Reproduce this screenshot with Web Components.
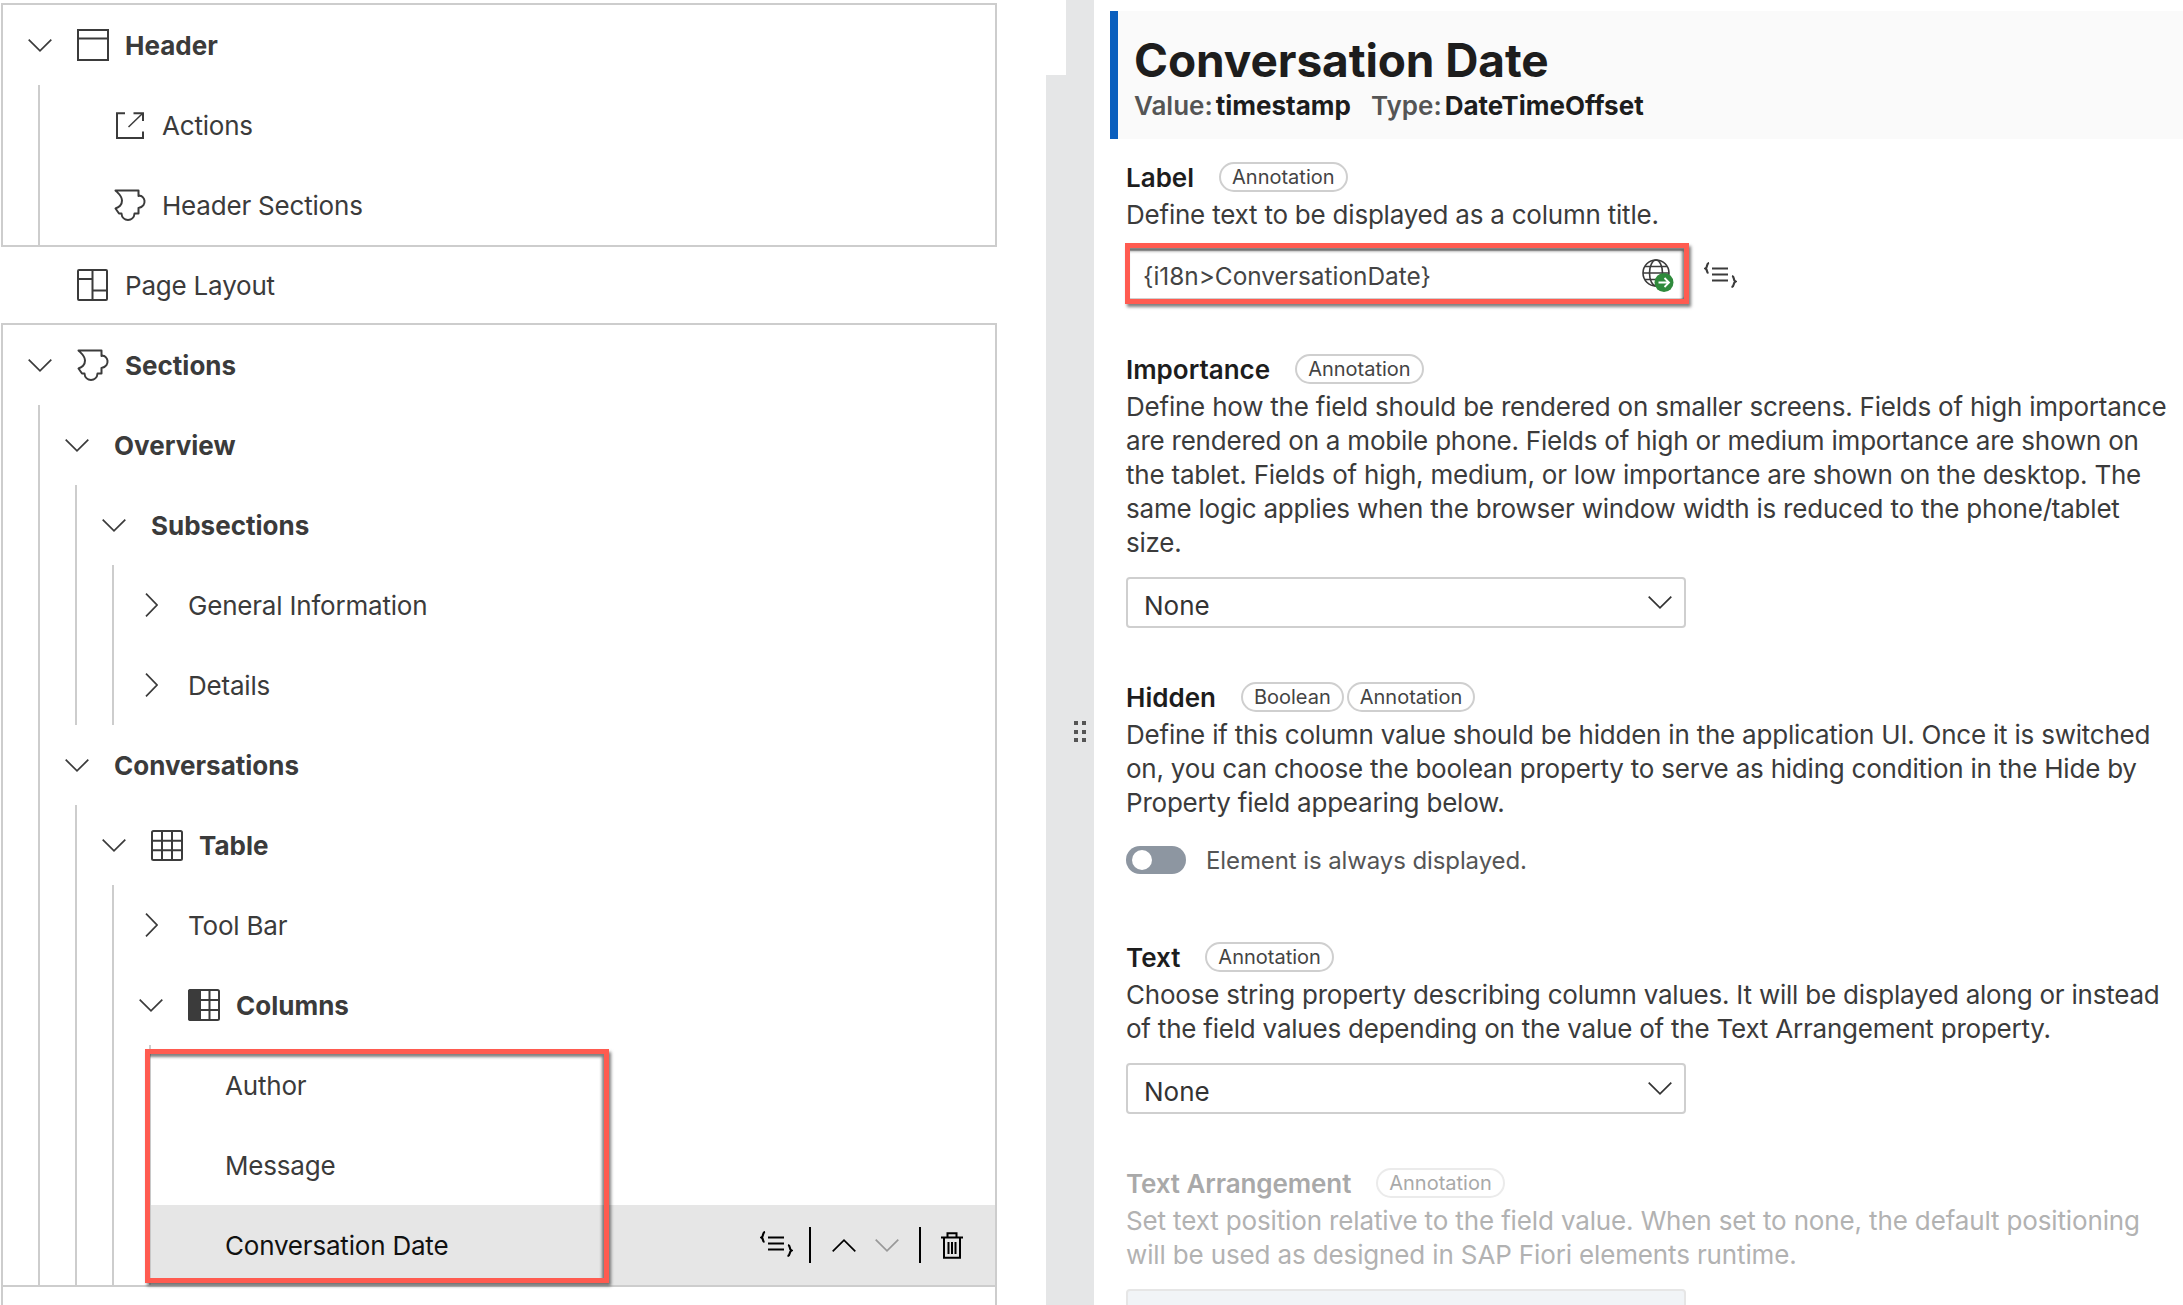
<!DOCTYPE html>
<html>
<head>
<meta charset="utf-8">
<title>Page Map</title>
<style>
html, body { margin: 0; height: 1305px; overflow: hidden; background: #fff; }
body { font-family: Inter, "Liberation Sans", sans-serif; font-size: 26px; color: #3b3b3b; }
</style>
</head>
<body>
<page-shell>
  <tree-panel slot="tree">
    <tree-box>
      <tree-node label="Header" icon="header" expand="open" strong>
        <tree-node label="Actions" icon="actions"></tree-node>
        <tree-node label="Header Sections" icon="puzzle"></tree-node>
      </tree-node>
    </tree-box>
    <tree-node label="Page Layout" icon="layout" compact></tree-node>
    <tree-box>
      <tree-node label="Sections" icon="puzzle" expand="open" strong>
        <tree-node label="Overview" expand="open" strong>
          <tree-node label="Subsections" expand="open" strong>
            <tree-node label="General Information" expand="closed"></tree-node>
            <tree-node label="Details" expand="closed"></tree-node>
          </tree-node>
        </tree-node>
        <tree-node label="Conversations" expand="open" strong>
          <tree-node label="Table" icon="table" expand="open" strong>
            <tree-node label="Tool Bar" expand="closed"></tree-node>
            <tree-node label="Columns" icon="columns" expand="open" strong>
              <tree-node label="Author"></tree-node>
              <tree-node label="Message"></tree-node>
              <tree-node label="Conversation Date" selected><row-actions slot="actions"></row-actions></tree-node>
            </tree-node>
          </tree-node>
        </tree-node>
      </tree-node>
    </tree-box>
    <tree-box open-end></tree-box>
    <call-out style="left:144px;top:1049px;width:464px;height:234px"></call-out>
  </tree-panel>

  <sash-bar slot="sash"></sash-bar>

  <prop-panel slot="props">
    <prop-header title="Conversation Date" value="timestamp" type="DateTimeOffset"></prop-header>

    <prop-field label="Label">
      <prop-chip slot="chips">Annotation</prop-chip>
      Define text to be displayed as a column title.
      <prop-input slot="control" value="{i18n&gt;ConversationDate}">
        <call-out style="left:-1px;top:-6px;right:-3px;bottom:-4px"></call-out>
      </prop-input>
    </prop-field>

    <prop-field label="Importance">
      <prop-chip slot="chips">Annotation</prop-chip>
      Define how the field should be rendered on smaller screens. Fields of high importance<br>
      are rendered on a mobile phone. Fields of high or medium importance are shown on<br>
      the tablet. Fields of high, medium, or low importance are shown on the desktop. The<br>
      same logic applies when the browser window width is reduced to the phone/tablet<br>
      size.
      <prop-select slot="control" value="None"></prop-select>
    </prop-field>

    <prop-field label="Hidden">
      <prop-chip slot="chips">Boolean</prop-chip>
      <prop-chip slot="chips">Annotation</prop-chip>
      Define if this column value should be hidden in the application UI. Once it is switched<br>
      on, you can choose the boolean property to serve as hiding condition in the Hide by<br>
      Property field appearing below.
      <prop-toggle slot="control">Element is always displayed.</prop-toggle>
    </prop-field>

    <prop-field label="Text">
      <prop-chip slot="chips">Annotation</prop-chip>
      Choose string property describing column values. It will be displayed along or instead<br>
      of the field values depending on the value of the Text Arrangement property.
      <prop-select slot="control" value="None"></prop-select>
    </prop-field>

    <prop-field label="Text Arrangement" disabled>
      <prop-chip slot="chips" disabled>Annotation</prop-chip>
      Set text position relative to the field value. When set to none, the default positioning<br>
      will be used as designed in SAP Fiori elements runtime.
      <prop-select slot="control" disabled></prop-select>
    </prop-field>
  </prop-panel>
</page-shell>

<script>
const CHEVRON_DOWN = '<svg width="24" height="13" viewBox="0 0 24 13" fill="none" stroke="currentColor" stroke-width="1.7"><path d="M.7 .7 12 11.8 23.3 .7"/></svg>';
const CHEVRON_RIGHT = '<svg width="13" height="24" viewBox="0 0 13 24" fill="none" stroke="currentColor" stroke-width="1.7"><path d="M1 .7 12 12 1 23.3"/></svg>';

// tree icons, all stroked with the text colour
const ICONS = {
    header: '<svg width="32" height="32" viewBox="0 0 32 32" fill="none" stroke="currentColor" stroke-width="2"><rect x="1" y="1" width="30" height="30"/><path d="M1 9.5H31"/></svg>',
    actions: '<svg style="margin-left:2px" width="28" height="27" viewBox="0 0 28 27" fill="none" stroke="currentColor" stroke-width="2"><path d="M9 1.2H1V26H27V19.5"/><path d="M17.5 1.2H27V9"/><path d="M26.5 1.5 12.5 15" stroke-width="1.5"/></svg>',
    puzzle: '<svg width="33" height="33" viewBox="0 0 33 33" fill="none" stroke="currentColor" stroke-width="2"><path d="M1.5 1.5H24.5V7C31 5.500 34 17 24.500 19V24.500H20.500C20 33 8 33 7.500 24.500H5L1.500 19.500C5 18 8 16.500 8 11.500 8 7 4 4 1.500 1.500Z" stroke-linejoin="round"/></svg>',
    layout: '<svg width="31" height="32" viewBox="0 0 31 32" fill="none" stroke="currentColor" stroke-width="2"><rect x="1" y="1" width="29" height="30" rx="1"/><path d="M15.500 1V31M1 10H15.500M15.500 21.500H30"/></svg>',
    table: '<svg width="32" height="31" viewBox="0 0 32 31" fill="none" stroke="currentColor" stroke-width="2"><rect x="1" y="1" width="30" height="29" rx="1.500"/><path d="M11 1V30M21 1V30M1 10.700H31M1 20.300H31"/></svg>',
    columns: '<svg width="32" height="32" viewBox="0 0 32 32" fill="none" stroke="currentColor" stroke-width="2"><rect x="1" y="1" width="30" height="30" rx="1.500"/><path d="M1 2.500A1.500 1.500 0 0 1 2.500 1H12V31H2.500A1.500 1.500 0 0 1 1 29.500Z" fill="currentColor"/><path d="M21.500 1V31M12 11H31M12 21H31"/></svg>'
};
const FORMULA = '<svg width="33" height="26" viewBox="0 0 33 26" fill="none" stroke="currentColor"><path d="M5 1C2 1.500 4 5 1.500 6.500 4 8 2 10.500 4.500 11" stroke-width="2.200"/><path d="M8 6.500H24M8 12.500H24M8 18.500H24" stroke-width="2"/><path d="M28 14C31 14.500 28.500 18 31.500 19.500 28.500 21 31 24.500 27.500 25" stroke-width="2.200"/></svg>';

class PageShell extends HTMLElement {
    constructor() {
        super();
        this.attachShadow({ mode: 'open' });
        this.shadowRoot.innerHTML = `
          <style>
            :host { display: flex; height: 1305px; overflow: hidden; }
            ::slotted([slot=tree]) { flex: 0 0 996px; margin-left: 1px; }
            ::slotted([slot=sash]) { flex: 0 0 48px; margin-left: 49px; }
            ::slotted([slot=props]) { flex: 1 1 0; margin-left: 16px; min-width: 0; }
          </style>
          <slot name="tree"></slot>
          <slot name="sash"></slot>
          <slot name="props"></slot>
        `;
    }
}

class TreePanel extends HTMLElement {
    constructor() {
        super();
        this.attachShadow({ mode: 'open' });
        this.shadowRoot.innerHTML = `
          <style>
            :host { display: block; position: relative; padding-top: 3px; box-sizing: border-box; }
          </style>
          <slot></slot>
        `;
    }
}

class TreeBox extends HTMLElement {
    constructor() {
        super();
        this.attachShadow({ mode: 'open' });
        this.shadowRoot.innerHTML = `
          <style>
            :host { display: block; border: 2px solid #cdcdcd; }
            :host([open-end]) { border-top: 0; border-bottom: 0; height: 30px; }
          </style>
          <slot></slot>
        `;
    }
}

class TreeNode extends HTMLElement {
    constructor() {
        super();
        this.attachShadow({ mode: 'open' });
    }
    connectedCallback() {
        const expand = this.getAttribute('expand');
        const icon = ICONS[this.getAttribute('icon')] || '';
        let chevron = '';
        if (expand == 'open') chevron = CHEVRON_DOWN;
        if (expand == 'closed') chevron = CHEVRON_RIGHT;
        this.shadowRoot.innerHTML = `
          <style>
            :host { display: block; color: #3b3b3b; }
            .row { display: flex; align-items: center; height: 80px; }
            :host([compact]) .row { height: 76px; padding-left: 2px; }
            :host([selected]) .row { background: #e6e6e6; color: #111; }
            .text { flex: 1 1 auto; white-space: nowrap; letter-spacing: -.2px; }
            :host([strong]) > .row .text { font-weight: 700; letter-spacing: 0; }
            .chev { flex: 0 0 74px; display: flex; justify-content: center; }
            .icon { flex: 0 0 48px; display: flex; align-items: center; }
            .icon:empty { display: none; }
            .kids { display: block; margin-left: 35px; border-left: 2px solid #cdcdcd; }
            .kids.none { display: none; }
          </style>
          <div class="row">
            <span class="chev">${chevron}</span>
            <span class="icon">${icon}</span>
            <span class="text">${this.getAttribute('label')}</span>
            <slot name="actions"></slot>
          </div>
          <div class="kids ${expand == 'open' ? '' : 'none'}"><slot></slot></div>
        `;
    }
}

class RowActions extends HTMLElement {
    constructor() {
        super();
        this.attachShadow({ mode: 'open' });
        this.shadowRoot.innerHTML = `
          <style>
            :host { display: flex; align-items: center; color: #000; margin-right: 32px; }
            svg { display: block; }
            .sep { width: 2px; height: 36px; background: #000; }
            .formula { margin-right: 16px; margin-top: -2px; }
            .up { margin-left: 21px; transform: rotate(180deg); }
            .down { margin-left: 19px; margin-right: 20px; color: #999; }
            .trash { margin-left: 20px; }
          </style>
          <span class="formula">${FORMULA}</span>
          <span class="sep"></span>
          <span class="up">${CHEVRON_DOWN}</span>
          <span class="down">${CHEVRON_DOWN}</span>
          <span class="sep"></span>
          <span class="trash"><svg width="22" height="27" viewBox="0 0 22 27" fill="none" stroke="currentColor" stroke-width="2"><path d="M0 5.500H22M6.500 5V1.200H15.500V5M3 5.500V25.800H19V5.500M7.500 10V22M11 10V22M14.500 10V22"/></svg></span>
        `;
    }
}

class CallOut extends HTMLElement {
    constructor() {
        super();
        this.attachShadow({ mode: 'open' });
        this.shadowRoot.innerHTML = `
          <style>
            :host {
              display: block;
              position: absolute;
              box-sizing: border-box;
              border: 5px solid #ff5b50;
              box-shadow: 2px 3px 3px rgba(0,0,0,.5), inset -2px 3px 3px rgba(0,0,0,.5);
              pointer-events: none;
            }
          </style>
        `;
    }
}

class SashBar extends HTMLElement {
    constructor() {
        super();
        this.attachShadow({ mode: 'open' });
        this.shadowRoot.innerHTML = `
          <style>
            :host { display: flex; flex-direction: column; height: 1305px; position: relative; }
            .top { height: 75px; margin-left: 20px; background: #e5e6e7; }
            .rest { flex: 1 1 auto; background: #e5e6e7; }
            .grip {
              position: absolute; left: 28px; top: 721px;
              display: grid; grid-template-columns: 4px 4px; gap: 4.500px 4px;
            }
            .grip i { display: block; width: 4px; height: 4px; background: #555; }
          </style>
          <div class="top"></div>
          <div class="rest"></div>
          <div class="grip"><i></i><i></i><i></i><i></i><i></i><i></i></div>
        `;
    }
}

class PropPanel extends HTMLElement {
    constructor() {
        super();
        this.attachShadow({ mode: 'open' });
        this.shadowRoot.innerHTML = `
          <style>
            :host { display: block; padding-top: 11px; }
          </style>
          <slot></slot>
        `;
    }
}

class PropHeader extends HTMLElement {
    constructor() {
        super();
        this.attachShadow({ mode: 'open' });
    }
    connectedCallback() {
        this.shadowRoot.innerHTML = `
          <style>
            :host {
              display: block; box-sizing: border-box; height: 128px; margin-bottom: 23px;
              background: #fafafa; border-left: 8px solid #0a5fbe;
              padding: 21px 0 0 16px; white-space: nowrap;
            }
            .title { font-size: 46px; line-height: 56px; font-weight: 700; color: #1d1d1d; letter-spacing: -.1px; }
            .sub { display: flex; gap: 20px; font-size: 26px; line-height: 34px; font-weight: 600; color: #555; margin-top: 1px; }
            b { font-weight: 700; color: #1d1d1d; margin-left: 3px; }
          </style>
          <div class="title">${this.getAttribute('title')}</div>
          <div class="sub">
            <span>Value:<b>${this.getAttribute('value')}</b></span>
            <span>Type:<b>${this.getAttribute('type')}</b></span>
          </div>
        `;
    }
}

class PropField extends HTMLElement {
    constructor() {
        super();
        this.attachShadow({ mode: 'open' });
    }
    connectedCallback() {
        this.shadowRoot.innerHTML = `
          <style>
            :host { display: block; padding-left: 16px; margin-bottom: 54px; white-space: nowrap; }
            .head { display: flex; align-items: center; height: 30px; margin-bottom: 6px; }
            .name { font-weight: 600; color: #1d1d1d; margin-right: 25px; }
            .chips { display: flex; gap: 3px; }
            .desc { line-height: 34px; color: #3b3b3b; margin-bottom: 17px; letter-spacing: -.22px; }
            :host([disabled]) .name { color: #a9a9a9; letter-spacing: -.1px; }
            :host([disabled]) .desc { color: #b2b2b2; letter-spacing: -.14px; }
          </style>
          <div class="head">
            <span class="name">${this.getAttribute('label')}</span>
            <span class="chips"><slot name="chips"></slot></span>
          </div>
          <div class="desc"><slot></slot></div>
          <slot name="control"></slot>
        `;
    }
}

class PropChip extends HTMLElement {
    constructor() {
        super();
        this.attachShadow({ mode: 'open' });
        this.shadowRoot.innerHTML = `
          <style>
            :host {
              display: block; box-sizing: border-box; height: 30px; padding: 0 11px;
              border: 2px solid #cfcfcf; border-radius: 15px;
              font-size: 20px; line-height: 26px; color: #444;
            }
            :host([disabled]) { border-color: #ebebeb; color: #a9a9a9; }
          </style>
          <slot></slot>
        `;
    }
}

class PropInput extends HTMLElement {
    constructor() {
        super();
        this.attachShadow({ mode: 'open' });
    }
    connectedCallback() {
        this.shadowRoot.innerHTML = `
          <style>
            :host { display: block; position: relative; width: 560px; height: 51px; }
            .box {
              box-sizing: border-box; height: 51px; display: flex; align-items: center; justify-content: space-between;
              padding: 0 10px 0 15px; border: 2px solid #cfcfcf; border-radius: 4px; color: #444;
              font-size: 24.400px;
            }
            .box span { position: relative; top: 1px; }
            .box svg { position: relative; top: 1px; }
            .formula { position: absolute; left: 578px; top: 13px; color: #3b3b3b; }
            svg { display: block; }
          </style>
          <div class="box">
            <span>${this.getAttribute('value').replace('>', '&gt;')}</span>
            <svg width="32" height="33" viewBox="0 0 32 33" fill="none">
              <g stroke="#3b3b3b" stroke-width="1.600"><circle cx="14" cy="14" r="13"/><ellipse cx="14" cy="14" rx="6.500" ry="13"/><path d="M1 14H27M3 7.500H25M3 20.500H25"/></g>
              <circle cx="22" cy="23.500" r="9.500" fill="#2f8a3c"/>
              <path d="M16.500 23.500H27M22.500 19 27 23.500 22.500 28" stroke="#fff" stroke-width="1.800"/>
            </svg>
          </div>
          <span class="formula">${FORMULA}</span>
          <slot></slot>
        `;
    }
}

class PropSelect extends HTMLElement {
    constructor() {
        super();
        this.attachShadow({ mode: 'open' });
    }
    connectedCallback() {
        this.shadowRoot.innerHTML = `
          <style>
            :host {
              display: flex; align-items: center; justify-content: space-between; box-sizing: border-box;
              width: 560px; height: 51px; padding: 0 12px 0 16px;
              border: 2px solid #cfcfcf; border-radius: 4px; color: #333; background: #fff;
            }
            :host([disabled]) { background: #f1f4f7; border-color: #e6e6e6; }
            span { position: relative; top: 3px; }
            svg { display: block; margin-top: -1px; }
          </style>
          <span>${this.getAttribute('value') || ''}</span>
          ${this.hasAttribute('disabled') ? '' : CHEVRON_DOWN}
        `;
    }
}

class PropToggle extends HTMLElement {
    constructor() {
        super();
        this.attachShadow({ mode: 'open' });
        this.shadowRoot.innerHTML = `
          <style>
            :host { display: flex; align-items: center; gap: 20px; height: 28px; margin-top: 26px; padding-bottom: 14px; color: #555; font-size: 24px; letter-spacing: -.1px; }
            .track { flex: 0 0 60px; height: 28px; border-radius: 14px; background: #8d96a1; position: relative; }
            .knob { position: absolute; left: 6px; top: 4px; width: 20px; height: 20px; border-radius: 50%; background: #fff; }
          </style>
          <span class="track"><span class="knob"></span></span>
          <span><slot></slot></span>
        `;
    }
}

customElements.define('page-shell', PageShell);
customElements.define('tree-panel', TreePanel);
customElements.define('tree-box', TreeBox);
customElements.define('tree-node', TreeNode);
customElements.define('row-actions', RowActions);
customElements.define('call-out', CallOut);
customElements.define('sash-bar', SashBar);
customElements.define('prop-panel', PropPanel);
customElements.define('prop-header', PropHeader);
customElements.define('prop-field', PropField);
customElements.define('prop-chip', PropChip);
customElements.define('prop-input', PropInput);
customElements.define('prop-select', PropSelect);
customElements.define('prop-toggle', PropToggle);
</script>
</body>
</html>
